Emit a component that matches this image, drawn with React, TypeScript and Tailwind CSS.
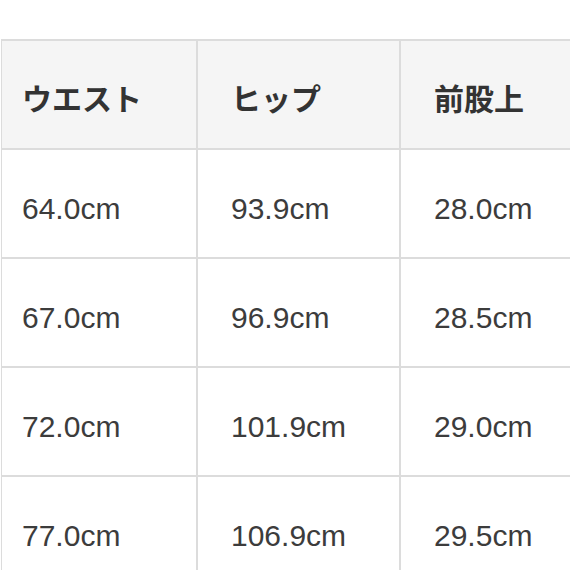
const headers = ['ウエスト', 'ヒップ', '前股上'];

const rows = [
  ['64.0cm', '93.9cm', '28.0cm'],
  ['67.0cm', '96.9cm', '28.5cm'],
  ['72.0cm', '101.9cm', '29.0cm'],
  ['77.0cm', '106.9cm', '29.5cm'],
];

const colClass = ['pl-[20px]', 'pl-[33px]', 'pl-[33px]'];

export default function App() {
  return (
    <div className="w-[570px] h-[570px] overflow-hidden bg-white pt-[39px]">
      <div className="grid w-[700px] grid-cols-[196px_203px_301px] border-t-2 border-l border-[#dcdcdc] ml-px">
        {headers.map((h, i) => (
          <div
            key={h}
            className={`h-[109px] flex items-center pt-[5px] bg-[#f5f5f5] border-b-2 border-r-2 border-[#dcdcdc] text-[30px] font-bold text-[#333] ${colClass[i]}`}
            style={{ fontFamily: '"Noto Sans CJK JP", "Noto Sans", sans-serif' }}
          >
            {h}
          </div>
        ))}
        {rows.map((r, ri) =>
          r.map((c, i) => (
            <div
              key={`${ri}-${i}`}
              className={`h-[109px] flex items-center pt-[10px] bg-white border-b-2 border-r-2 border-[#dcdcdc] text-[30px] text-[#3c3c3c] ${colClass[i]}`}
              style={{ fontFamily: '"Liberation Sans", Arial, sans-serif' }}
            >
              {c}
            </div>
          ))
        )}
      </div>
    </div>
  );
}
